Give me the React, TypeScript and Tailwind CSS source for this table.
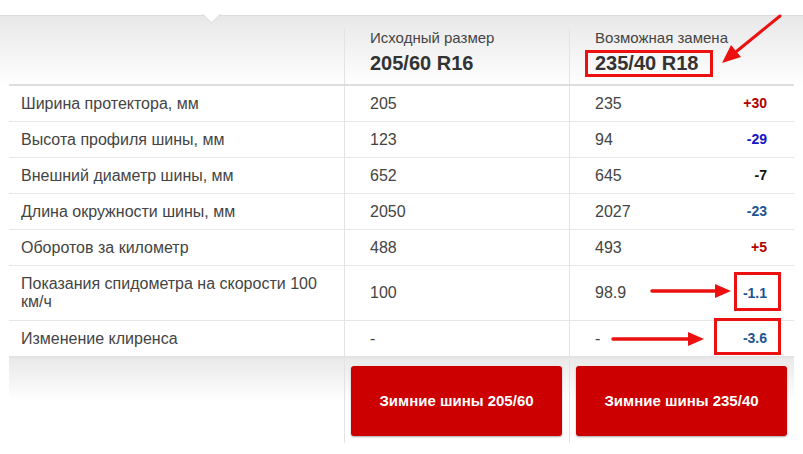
type Row = {
  label: string;
  from: string;
  to: string;
  diff: string;
  diffColor: string;
};

const rows: Row[] = [
  { label: "Ширина протектора, мм", from: "205", to: "235", diff: "+30", diffColor: "text-[#b00000]" },
  { label: "Высота профиля шины, мм", from: "123", to: "94", diff: "-29", diffColor: "text-[#1414c8]" },
  { label: "Внешний диаметр шины, мм", from: "652", to: "645", diff: "-7", diffColor: "text-[#111111]" },
  { label: "Длина окружности шины, мм", from: "2050", to: "2027", diff: "-23", diffColor: "text-[#1d5592]" },
  { label: "Оборотов за километр", from: "488", to: "493", diff: "+5", diffColor: "text-[#b00000]" },
  { label: "Показания спидометра на скорости 100 км/ч", from: "100", to: "98.9", diff: "-1.1", diffColor: "text-[#1d5592]" },
  { label: "Изменение клиренса", from: "-", to: "-", diff: "-3.6", diffColor: "text-[#1d5592]" },
];

function Annotations() {
  return (
    <>
      <div className="pointer-events-none absolute left-[585px] top-[50px] h-[27px] w-[128px] border-[3px] border-[#ec1010]" />
      <div className="pointer-events-none absolute left-[734px] top-[272px] h-[39px] w-[47px] border-[3px] border-[#ec1010]" />
      <div className="pointer-events-none absolute left-[714px] top-[318px] h-[37px] w-[67px] border-[3px] border-[#ec1010]" />
      <svg className="pointer-events-none absolute left-0 top-0" width="803" height="454" viewBox="0 0 803 454">
        <line x1="780" y1="16" x2="737" y2="51" stroke="#ec1010" strokeWidth="3" strokeLinecap="round" />
        <polygon points="722,63 741,57 731,45" fill="#ec1010" />
        <line x1="652" y1="291" x2="717" y2="291" stroke="#ec1010" strokeWidth="3.5" strokeLinecap="round" />
        <polygon points="715,284 715,298 731,291" fill="#ec1010" />
        <line x1="613" y1="339" x2="690" y2="339" stroke="#ec1010" strokeWidth="3.5" strokeLinecap="round" />
        <polygon points="688,332 688,346 704,339" fill="#ec1010" />
      </svg>
    </>
  );
}

export default function App() {
  return (
    <div className="relative h-[454px] w-[803px] overflow-hidden bg-white font-['Liberation_Sans',Arial,sans-serif] text-[#444]">
      <div className="h-[15px]" />

      <div className="relative border-t border-[#dcdcdc] bg-linear-to-b from-[#e8e8e8] to-white pt-3">
        <div className="absolute left-[205px] top-[-8px] h-[13px] w-[13px] rotate-45 border-b border-r border-[#dcdcdc] bg-white" />

        <div className="mx-[9px] grid grid-cols-[335px_225px_224px] border-b-2 border-[#dedede]">
          <div />
          <div className="border-l border-[#e3e3e3] pb-[9px] pl-[25px] pt-[2px]">
            <div className="text-[15px] leading-4">Исходный размер</div>
            <div className="mt-[5px] text-[20px] font-bold leading-6 text-[#333]">205/60 R16</div>
          </div>
          <div className="border-l border-[#e3e3e3] pb-[9px] pl-[25px] pt-[2px]">
            <div className="text-[15px] leading-4">Возможная замена</div>
            <div className="mt-[5px] text-[20px] font-bold leading-6 text-[#333]">235/40 R18</div>
          </div>
        </div>
      </div>

      <div className="mx-[9px]">
        {rows.map((row, i) => {
          const isLast = i === rows.length - 1;
          const isTall = row.label.length > 30;
          return (
            <div
              key={row.label}
              className={`grid grid-cols-[335px_225px_224px] text-[16px] ${
                isLast ? "h-[37px] border-b-2 border-[#e3e3e3]" : "border-b border-[#e6e6e6]"
              } ${isTall ? "h-[55px]" : isLast ? "" : "h-[36px]"}`}
            >
              <div className={`flex items-center pl-3 pr-3 leading-[18px] ${isTall ? "py-[9px]" : ""}`}>{row.label}</div>
              <div className="flex items-center border-l border-[#e3e3e3] pl-[25px]">{row.from}</div>
              <div className="flex items-center justify-between border-l border-[#e3e3e3] pl-[25px] pr-[26px]">
                <span>{row.to}</span>
                <span className={`text-[14px] font-bold ${row.diffColor}`}>{row.diff}</span>
              </div>
            </div>
          );
        })}

        <div className="grid grid-cols-[335px_225px_224px] bg-linear-to-b from-[#e9e9e9] via-white via-50% to-white">
          <div />
          <div className="border-l border-[#e3e3e3] pb-[7px] pl-[6px] pr-[7px] pt-2">
            <button
              type="button"
              className="flex h-[70px] w-full items-center justify-center rounded-[3px] bg-[#cc0000] text-[15px] font-bold text-white shadow-[0_1px_2px_rgba(0,0,0,0.35)]"
            >
              Зимние шины 205/60
            </button>
          </div>
          <div className="border-l border-[#e3e3e3] pb-[7px] pl-[6px] pr-[6px] pt-2">
            <button
              type="button"
              className="flex h-[70px] w-full items-center justify-center rounded-[3px] bg-[#cc0000] text-[15px] font-bold text-white shadow-[0_1px_2px_rgba(0,0,0,0.35)]"
            >
              Зимние шины 235/40
            </button>
          </div>
        </div>
      </div>

      <Annotations />
    </div>
  );
}
